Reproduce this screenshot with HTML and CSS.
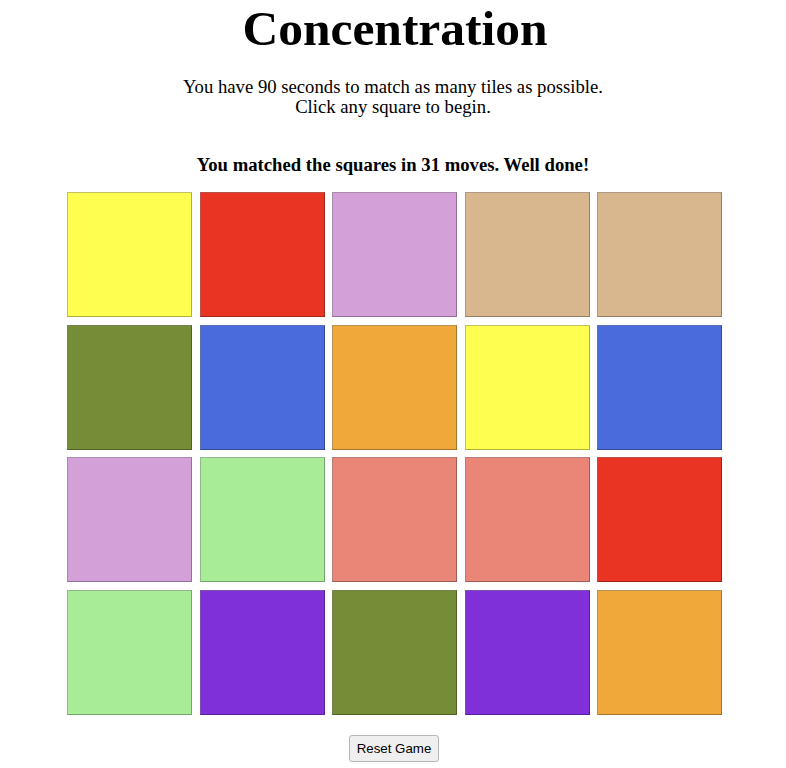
FILE: index.html
```html
<!DOCTYPE html>
<html>
<head>
<meta charset="utf-8">
<link rel="stylesheet" href="styles.css">
</head>
<body>
<div class="page">
  <h1 class="title">Concentration</h1>
  <p class="intro">You have 90 seconds to match as many tiles as possible.<br>Click any square to begin.</p>
  <p class="status">You matched the squares in 31 moves. Well done!</p>
  <div class="board">
    <div class="tile yellow"></div>
    <div class="tile red"></div>
    <div class="tile plum"></div>
    <div class="tile tan"></div>
    <div class="tile tan"></div>
    <div class="tile olive"></div>
    <div class="tile blue"></div>
    <div class="tile orange"></div>
    <div class="tile yellow"></div>
    <div class="tile blue"></div>
    <div class="tile plum"></div>
    <div class="tile green"></div>
    <div class="tile salmon"></div>
    <div class="tile salmon"></div>
    <div class="tile red"></div>
    <div class="tile green"></div>
    <div class="tile purple"></div>
    <div class="tile olive"></div>
    <div class="tile purple"></div>
    <div class="tile orange"></div>
  </div>
  <div class="actions"><button class="reset">Reset Game</button></div>
</div>
</body>
</html>
```
FILE: styles.css
```css
html, body { margin: 0; padding: 0; background: #fff; }
body { font-family: "Liberation Serif", "Times New Roman", serif; color: #000; }
.page { display: flex; flex-direction: column; align-items: center; padding-top: 3px; }
.title { font-size: 49.5px; font-weight: bold; margin: 0 0 0 4px; line-height: 52px; }
.intro { font-size: 18.7px; line-height: 20px; text-align: center; margin: 22px 0 0; }
.status { font-size: 18.7px; font-weight: bold; line-height: 20px; margin: 38px 0 0; }
.board {
  display: grid;
  grid-template-columns: repeat(5, 125px);
  grid-auto-rows: 125px;
  gap: 7.5px;
  margin-top: 17px;
  margin-left: 3px;
}
.tile {
  box-sizing: border-box;
  border: 1px solid rgba(0,0,0,0.3);
  border-top-color: rgba(120,120,120,0.45);
  border-left-color: rgba(120,120,120,0.45);
}
.yellow { background: #fefe50; }
.red { background: #e93424; }
.plum { background: #d4a0d8; }
.tan { background: #d8b78e; }
.olive { background: #748d36; }
.blue { background: #4a6bdb; }
.orange { background: #f0a83a; }
.green { background: #a8ec98; }
.salmon { background: #e98677; }
.purple { background: #7f30d9; }
.actions { margin-top: 20px; margin-left: 2px; }
.reset {
  font-family: "Liberation Sans", Arial, sans-serif;
  font-size: 13.3px;
  padding: 5px 7px;
  background: #efefef;
  border: 1px solid #b6b6b6;
  border-radius: 3px;
  color: #000;
}
```
